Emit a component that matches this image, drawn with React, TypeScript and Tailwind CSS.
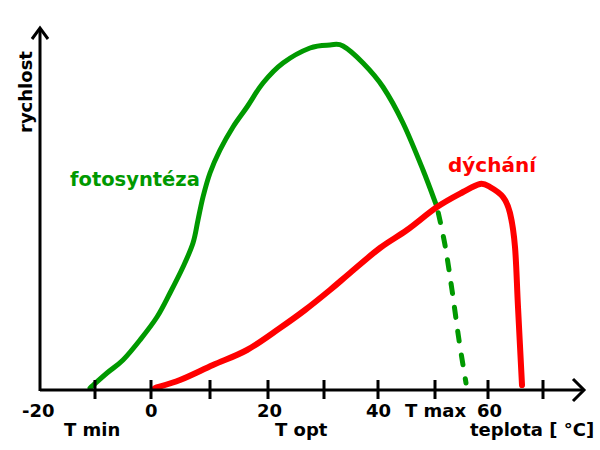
type Pt = [number, number];

// Smooth curve through points (Catmull-Rom -> cubic Bezier)
function smoothPath(pts: Pt[]): string {
  let d = `M${pts[0][0]},${pts[0][1]}`;
  for (let i = 0; i < pts.length - 1; i++) {
    const p0 = pts[i - 1] ?? pts[i];
    const p1 = pts[i];
    const p2 = pts[i + 1];
    const p3 = pts[i + 2] ?? p2;
    const c1x = p1[0] + (p2[0] - p0[0]) / 6;
    const c1y = p1[1] + (p2[1] - p0[1]) / 6;
    const c2x = p2[0] - (p3[0] - p1[0]) / 6;
    const c2y = p2[1] - (p3[1] - p1[1]) / 6;
    d += ` C${c1x},${c1y} ${c2x},${c2y} ${p2[0]},${p2[1]}`;
  }
  return d;
}

const photosynthesis: Pt[] = [
  [90, 388], [107, 373], [123, 360], [140, 340], [157, 317], [170, 293],
  [183, 267], [193, 243], [198, 220], [203, 197], [210, 173], [220, 150],
  [233, 127], [247, 107], [263, 83], [283, 63], [310, 48], [330, 45],
  [343, 46], [363, 63], [383, 87], [403, 123], [423, 170], [437, 207],
];

const photosynthesisDashed: Pt[] = [
  [437, 207], [445, 245], [452, 290], [459, 340], [466, 383],
];

const respiration: Pt[] = [
  [155, 388], [180, 380], [213, 365], [247, 350], [280, 328], [305, 310],
  [330, 290], [350, 273], [380, 248], [407, 230], [437, 207], [463, 192],
  [480, 184], [490, 187], [503, 197], [510, 213], [515, 247], [518, 307],
  [522, 385],
];

const ticks = [95, 151, 210, 268, 324, 378, 435, 488, 543];

const labels: { text: string; x: number; y: number }[] = [
  { text: '-20', x: 22, y: 417 },
  { text: '0', x: 145, y: 417 },
  { text: '20', x: 257, y: 417 },
  { text: '40', x: 366, y: 417 },
  { text: 'T max', x: 405, y: 417 },
  { text: '60', x: 477, y: 417 },
  { text: 'T min', x: 64, y: 436 },
  { text: 'T opt', x: 275, y: 436 },
  { text: 'teplota [ °C]', x: 470, y: 436 },
];

export default function App() {
  return (
    <div className="w-[600px] h-[450px] bg-white">
      <svg width={600} height={450} viewBox="0 0 600 450" className="block">
        {/* Curves */}
        <path
          d={smoothPath(photosynthesis)}
          fill="none"
          stroke="#009900"
          strokeWidth={5}
          strokeLinecap="round"
          strokeLinejoin="round"
        />
        <path
          d={smoothPath(photosynthesisDashed)}
          fill="none"
          stroke="#009900"
          strokeWidth={5}
          strokeLinecap="round"
          strokeDasharray="10 14"
          strokeDashoffset={-6}
        />
        <path
          d={smoothPath(respiration)}
          fill="none"
          stroke="#ff0000"
          strokeWidth={6}
          strokeLinecap="round"
          strokeLinejoin="round"
        />

        {/* Axes */}
        <g stroke="#000" strokeWidth={3} fill="none" strokeLinejoin="miter">
          <line x1={40} y1={390} x2={582} y2={390} />
          <polyline points="573,379 584,390 573,401" />
          <line x1={40} y1={391} x2={40} y2={29} />
          <polyline points="32,39 40,28 48,39" />
          {ticks.map((x) => (
            <line key={x} x1={x} y1={380} x2={x} y2={399} />
          ))}
        </g>

        {/* Labels */}
        <g className="font-['DejaVu_Sans',sans-serif] font-bold text-[18px]">
          {labels.map((l) => (
            <text key={l.text} x={l.x} y={l.y} fill="#000">
              {l.text}
            </text>
          ))}
          <text x={70} y={186} fill="#009900" className="text-[19.5px]">
            fotosyntéza
          </text>
          <text x={448} y={172} fill="#ff0000" className="text-[20px]">
            dýchání
          </text>
          <text
            x={0}
            y={0}
            fill="#000"
            transform="translate(32,133) rotate(-90)"
          >
            rychlost
          </text>
        </g>
      </svg>
    </div>
  );
}
